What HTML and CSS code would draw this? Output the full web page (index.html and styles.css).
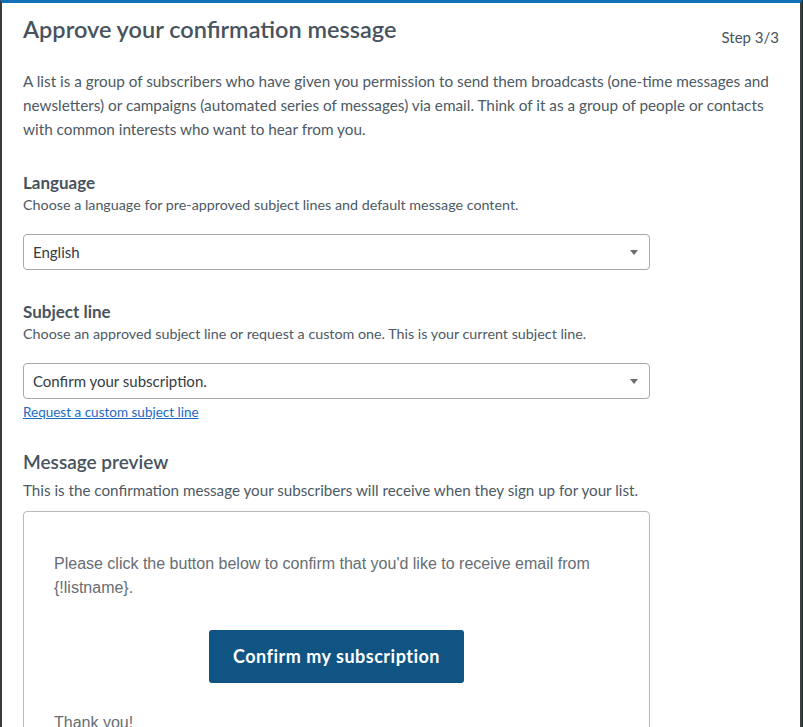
FILE: index.html
```html
<!DOCTYPE html>
<html lang="en">
<head>
    <meta charset="UTF-8">
    <meta name="viewport" content="width=device-width, initial-scale=1.0">
    <title>Approve your confirmation message</title>
    <link rel="stylesheet" href="styles.css">
</head>
<body>
    <div class="modal">
        <div class="modal-header">
            <h1>Approve your confirmation message</h1>
            <span class="step">Step 3/3</span>
        </div>
        <p class="intro">A list is a group of subscribers who have given you permission to send them broadcasts (one-time messages and newsletters) or campaigns (automated series of messages) via email. Think of it as a group of people or contacts with common interests who want to hear from you.</p>

        <div class="field">
            <h2>Language</h2>
            <p class="help">Choose a language for pre-approved subject lines and default message content.</p>
            <div class="select">
                <span>English</span>
                <span class="caret"></span>
            </div>
        </div>

        <div class="field">
            <h2>Subject line</h2>
            <p class="help">Choose an approved subject line or request a custom one. This is your current subject line.</p>
            <div class="select">
                <span>Confirm your subscription.</span>
                <span class="caret"></span>
            </div>
            <a href="#" class="custom-link">Request a custom subject line</a>
        </div>

        <div class="field field-preview">
            <h2>Message preview</h2>
            <p class="help">This is the confirmation message your subscribers will receive when they sign up for your list.</p>
            <div class="preview">
                <p>Please click the button below to confirm that you'd like to receive email from {!listname}.</p>
                <div class="preview-action">
                    <a href="#" class="confirm-btn">Confirm my subscription</a>
                </div>
                <p>Thank you!</p>
            </div>
        </div>
    </div>
</body>
</html>
```

FILE: styles.css
```css
html, body { margin: 0; height: 100%; overflow: hidden; }
body { background: #16302c; font-family: Lato, "Noto Sans", sans-serif; color: #4d5964; }
.modal {
    background: #fff;
    margin-right: 1px;
    min-height: 100%;
    border-top: 3px solid #1272b8;
    border-left: 2px solid #3b3b3b;
    border-right: 2px solid #3e3e3e;
    padding: 0 21px 0 21px;
    box-sizing: border-box;
}
.modal-header { display: flex; justify-content: space-between; align-items: flex-start; padding-top: 13px; }
.modal-header h1 { margin: 0; font-size: 23.5px; font-weight: 600; color: #48535e; line-height: 26px; }
.step { font-size: 15px; margin-top: 12px; color: #48535e; }
.intro { margin: 23px 0 0; font-size: 15.3px; line-height: 24px; }
.field { margin-top: 31px; }
.field h2 { margin: 0; font-size: 17px; font-weight: 700; line-height: 22px; color: #48535e; }
.help { margin: 1px 0 0; font-size: 14.3px; line-height: 20px; }
.select {
    width: 627px;
    height: 36px;
    margin-top: 19px;
    box-sizing: border-box;
    border: 1px solid #a8a8a8;
    border-radius: 4px;
    display: flex;
    align-items: center;
    justify-content: space-between;
    padding: 0 11px 0 9px;
    font-size: 15px;
    color: #333b44;
}
.caret { width: 0; height: 0; border-left: 4px solid transparent; border-right: 4px solid transparent; border-top: 5px solid #6e6e6e; }
.custom-link { display: inline-block; margin-top: 5px; font-size: 13.5px; color: #1b6ac2; }
.field.field-preview { margin-top: 29px; }
.field-preview h2 { font-size: 19px; font-weight: 600; line-height: 26px; }
.field-preview .help { font-size: 15.2px; margin-top: 4px; line-height: 22px; }
.preview {
    width: 627px;
    margin-top: 10px;
    box-sizing: border-box;
    border: 1px solid #b8b8b8;
    border-radius: 4px;
    padding: 40px 30px 0;
    font-family: "Liberation Sans", Arial, sans-serif;
    color: #666d73;
    height: 260px;
}
.preview p { margin: 0; font-size: 16px; line-height: 24px; }
.preview-action { text-align: center; margin: 30px 0 28px; }
.confirm-btn {
    display: inline-block;
    background: #0f5483;
    color: #fff;
    text-decoration: none;
    font-family: Lato, "Noto Sans", sans-serif;
    font-size: 18px;
    font-weight: 700;
    letter-spacing: 0.5px;
    padding: 0 24px;
    line-height: 53px;
    border-radius: 3px;
}
```
